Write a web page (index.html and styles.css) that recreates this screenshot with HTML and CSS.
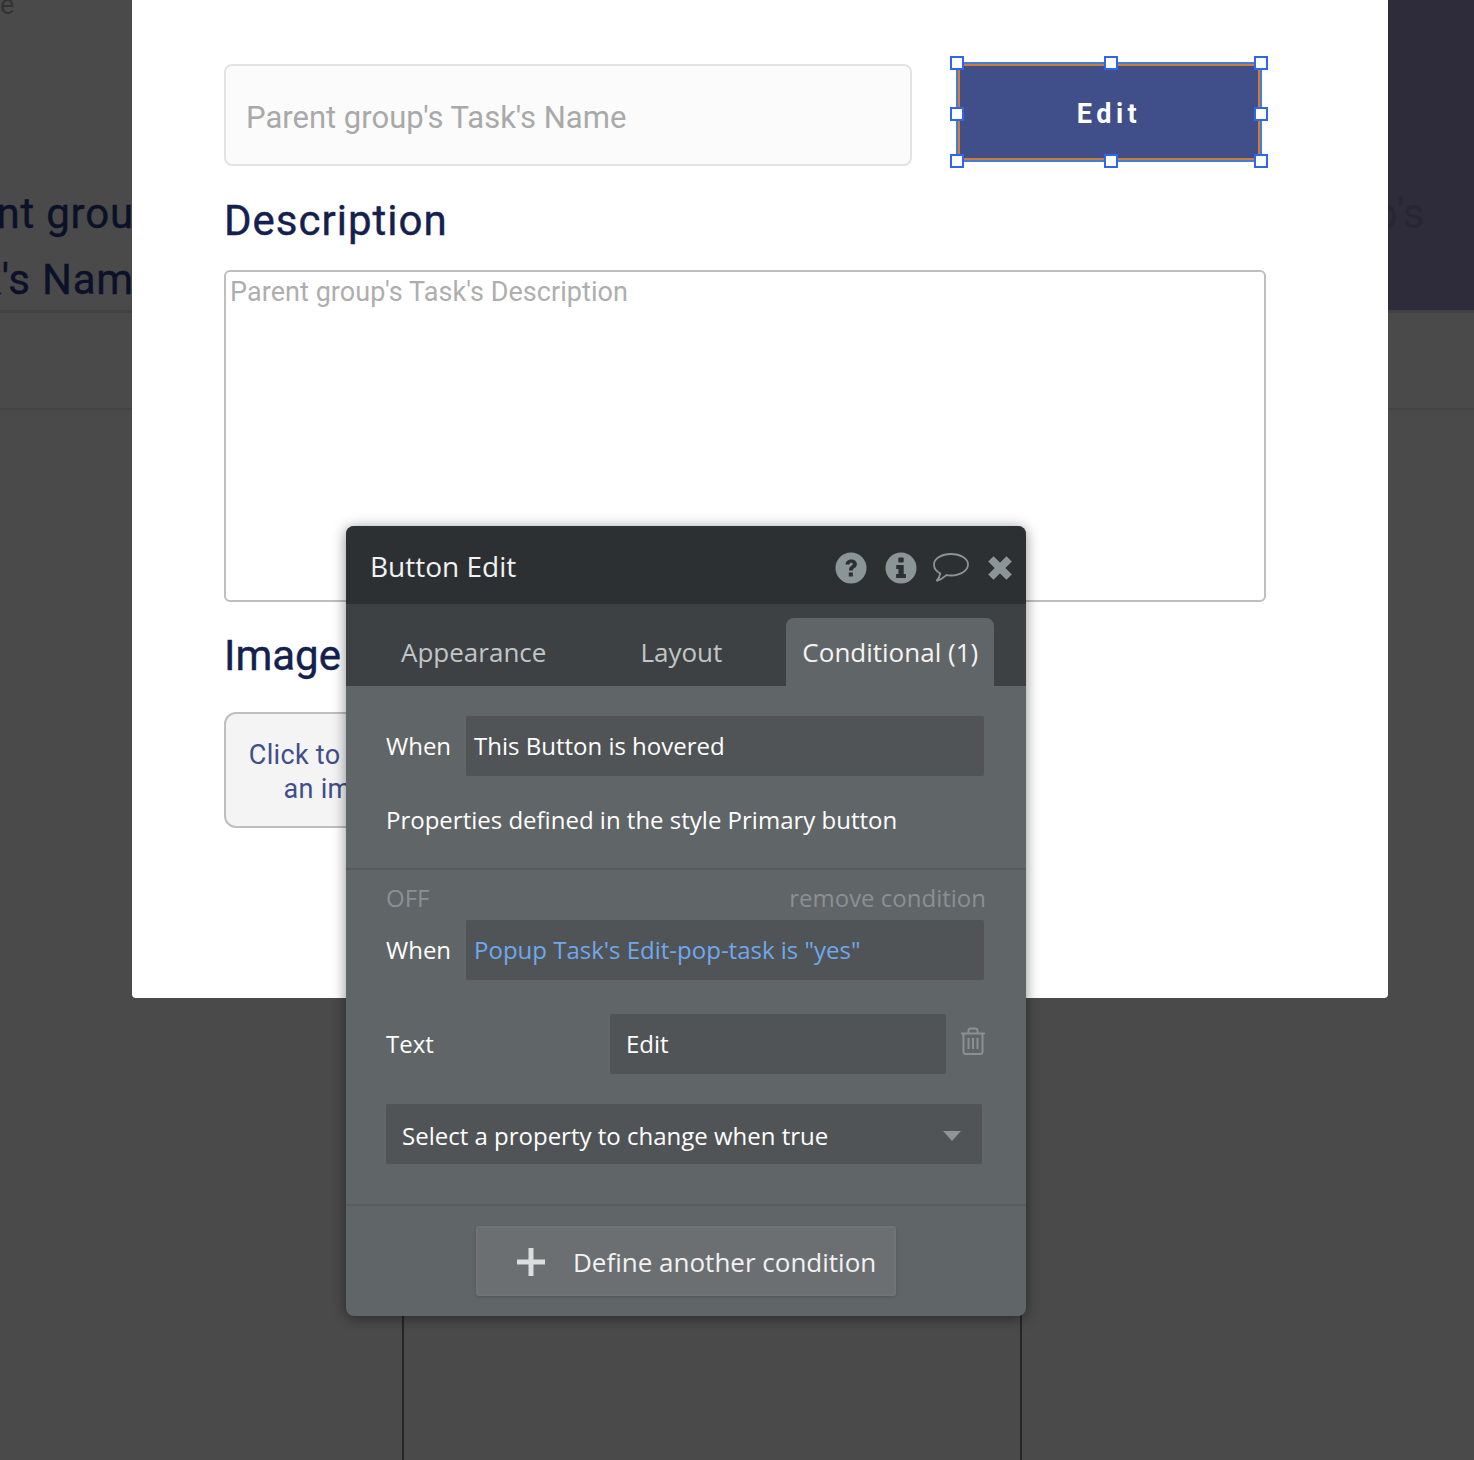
FILE: index.html
```html
<!DOCTYPE html>
<html lang="en">
<head>
    <meta charset="UTF-8">
    <title>Button Edit</title>
    <link rel="stylesheet" href="styles.css">
</head>
<body>
    <div class="backdrop">
        <div class="back-top">
            <div class="back-left">
                <div class="back-letter">e</div>
                <div class="back-line back-line-one">Parent grou</div>
                <div class="back-line back-line-two">Task's Name</div>
            </div>
            <div class="back-right">
                <div class="back-line">p's</div>
            </div>
        </div>
        <div class="back-band"></div>
    </div>

    <div class="modal">
        <div class="name-row">
            <div class="name-input">Parent group's Task's Name</div>
            <div class="edit-button">
                Edit
                <span class="handle h-tl"></span>
                <span class="handle h-tc"></span>
                <span class="handle h-tr"></span>
                <span class="handle h-ml"></span>
                <span class="handle h-mr"></span>
                <span class="handle h-bl"></span>
                <span class="handle h-bc"></span>
                <span class="handle h-br"></span>
            </div>
        </div>
        <h2 class="section-title">Description</h2>
        <div class="description-input">Parent group's Task's Description</div>
        <h2 class="section-title image-title">Image</h2>
        <div class="upload-box">Click to upload an image</div>
    </div>

    <div class="guide guide-left"></div>
    <div class="guide guide-right"></div>

    <div class="panel">
        <div class="panel-header">
            <div class="panel-title">Button Edit</div>
            <div class="panel-icons">
                <svg width="32" height="32" viewBox="0 0 32 32">
                    <circle cx="16" cy="16" r="15.5" fill="#8b9496"/>
                    <path d="M10.5 12.6c.3-3.2 2.700-5 5.800-5 3.200 0 5.600 1.800 5.600 4.600 0 2-1.100 3-2.500 3.900-1.100.7-1.500 1.200-1.500 2.400h-4c0-2.300.7-3.500 2.300-4.500 1-.7 1.600-1.100 1.600-1.900 0-.8-.7-1.300-1.600-1.300-1 0-1.700.6-1.800 1.800z" fill="#2c3033"/>
                    <rect x="13.800" y="20.500" width="4.100" height="4" fill="#2c3033"/>
                </svg>
                <svg width="32" height="32" viewBox="0 0 32 32">
                    <circle cx="16" cy="16" r="15.500" fill="#8b9496"/>
                    <rect x="13.300" y="5.500" width="5.400" height="5" rx="1" fill="#2c3033"/>
                    <path d="M11.200 13h7.500v9h2.200v4h-9.800v-4h2.300v-5h-2.200z" fill="#2c3033"/>
                </svg>
                <svg class="comment-icon" width="36" height="32" viewBox="0 0 36 32">
                    <path d="M18 2C27.500 2 35 6.600 35 12.500S27.500 23.500 18 23.500c-1.600 0-3.200-.1-4.600-.4C10.500 25.800 7.500 27.800 3.500 29c2-2 3.200-4.200 3.800-7.500C3.300 19.500 1 16.200 1 12.500 1 6.600 8.500 2 18 2z" fill="none" stroke="#8b9496" stroke-width="1.800"/>
                </svg>
                <svg width="26" height="26" viewBox="0 0 26 26">
                    <path d="M6.500 6.500l13 13M19.500 6.500l-13 13" fill="none" stroke="#8b9496" stroke-width="7.500" stroke-linecap="square"/>
                </svg>
            </div>
        </div>
        <div class="panel-tabs">
            <div class="tab tab-appearance">Appearance</div>
            <div class="tab tab-layout">Layout</div>
            <div class="tab tab-active">Conditional (1)</div>
        </div>
        <div class="panel-body">
            <div class="condition condition-first">
                <div class="when-row">
                    <span class="field-label">When</span>
                    <div class="field">This Button is hovered</div>
                </div>
                <div class="style-note">Properties defined in the style Primary button</div>
            </div>
            <div class="condition condition-second">
                <div class="condition-top">
                    <span>OFF</span>
                    <span>remove condition</span>
                </div>
                <div class="when-row">
                    <span class="field-label">When</span>
                    <div class="field field-link">Popup Task's Edit-pop-task is "yes"</div>
                </div>
                <div class="text-row">
                    <span class="text-label">Text</span>
                    <div class="field field-text">Edit</div>
                    <svg class="trash" width="26" height="28" viewBox="0 0 26 28">
                        <path d="M1 6.500h24M8.500 6V3.500q0-2 2-2h5q2 0 2 2V6M3.500 6.500v18q0 2.500 2.500 2.500h14q2.500 0 2.500-2.500v-18M8.500 11v11M13 11v11M17.500 11v11" fill="none" stroke="#8b9094" stroke-width="2"/>
                    </svg>
                </div>
                <div class="select-row">
                    <span>Select a property to change when true</span>
                    <span class="caret"></span>
                </div>
            </div>
            <div class="panel-footer">
                <div class="add-button">
                    <svg width="30" height="30" viewBox="0 0 30 30">
                        <path d="M12.500 1h5v11.500H29v5H17.500V29h-5V17.500H1v-5h11.500z" fill="#dcdddd"/>
                    </svg>
                    <span>Define another condition</span>
                </div>
            </div>
        </div>
    </div>
</body>
</html>
```

FILE: styles.css
```css
* {
    margin: 0;
    padding: 0;
    box-sizing: border-box;
}

body {
    width: 1474px;
    height: 1460px;
    position: relative;
    overflow: hidden;
    background: #4a4a4a;
    font-family: 'Open Sans', sans-serif;
}

/* dimmed page behind the popup */
.back-top {
    height: 313px;
    display: flex;
    justify-content: space-between;
    border-bottom: 3px solid #424242;
}

.back-left {
    width: 132px;
    overflow: hidden;
    display: flex;
    flex-direction: column;
    color: #0b1128;
}

.back-letter {
    flex: none;
    height: 192px;
    margin-top: -11px;
    font-family: Roboto, sans-serif;
    font-size: 27px;
    color: #333;
}

.back-line {
    flex: none;
    font-family: Roboto, sans-serif;
    font-size: 42px;
    line-height: 66px;
    white-space: nowrap;
}

.back-line-one {
    letter-spacing: 0.8px;
    -webkit-text-stroke: 0.4px #0b1128;
    text-indent: -92px;
}

.back-line-two {
    letter-spacing: 0.8px;
    -webkit-text-stroke: 0.4px #0b1128;
    text-indent: -90px;
}

.back-right {
    width: 86px;
    background: #2e2c3a;
    padding-top: 181px;
    color: #282633;
    overflow: hidden;
}

.back-right .back-line {
    text-indent: -14px;
}

.back-band {
    height: 97px;
    border-bottom: 2px solid #444;
}

/* popup */
.modal {
    position: absolute;
    left: 132px;
    top: 0;
    width: 1256px;
    height: 998px;
    background: #fff;
    border-radius: 0 0 4px 4px;
    padding: 64px 122px 0 92px;
}

.name-row {
    display: flex;
    align-items: flex-start;
    gap: 44px;
}

.name-input {
    width: 688px;
    height: 102px;
    background: #fbfbfb;
    border: 2px solid #e3e3e3;
    border-radius: 8px;
    padding: 34px 20px 0;
    font-family: Roboto, sans-serif;
    font-size: 31px;
    line-height: 36px;
    color: #a9a9a9;
}

.edit-button {
    position: relative;
    width: 306px;
    height: 100px;
    margin-top: -2px;
    padding-top: 4px;
    background: #404e8a;
    border: 2px solid #3d7ee0;
    box-shadow: inset 0 0 0 2px #d27c2f;
    display: flex;
    align-items: center;
    justify-content: center;
    color: #fff;
    font-family: Roboto, sans-serif;
    font-size: 27px;
    font-weight: 700;
    letter-spacing: 4.500px;
}

.handle {
    position: absolute;
    width: 14px;
    height: 14px;
    background: #fff;
    border: 2px solid #2f66ee;
}

.h-tl, .h-tc, .h-tr { top: -8px; }
.h-ml, .h-mr { top: 43px; }
.h-bl, .h-bc, .h-br { top: 90px; }
.h-tl, .h-ml, .h-bl { left: -8px; }
.h-tc, .h-bc { left: 146px; }
.h-tr, .h-mr, .h-br { left: 296px; }

.section-title {
    font-family: Roboto, sans-serif;
    font-size: 42px;
    font-weight: 400;
    -webkit-text-stroke: 0.4px #14204e;
    letter-spacing: 1px;
    line-height: 50px;
    color: #14204e;
    margin-top: 30px;
}

.description-input {
    width: 1042px;
    height: 332px;
    margin-top: 24px;
    border: 2px solid #bfbfbf;
    border-radius: 6px;
    padding: 3px 4px;
    font-family: Roboto, sans-serif;
    font-size: 27px;
    letter-spacing: 0.06px;
    line-height: 34px;
    color: #aeaeae;
}

.image-title {
    margin-top: 29px;
    letter-spacing: 0;
}

.upload-box {
    width: 232px;
    height: 116px;
    margin-top: 31px;
    border: 2px solid #bfbfbf;
    border-radius: 12px;
    background: #f4f4f4;
    padding: 24px 14px 0;
    text-align: center;
    font-family: Roboto, sans-serif;
    font-size: 27px;
    letter-spacing: 0.3px;
    line-height: 34px;
    color: #404e8a;
}

.guide {
    position: absolute;
    top: 1300px;
    width: 2px;
    height: 160px;
    background: #262626;
}

.guide-left { left: 402px; }
.guide-right { left: 1020px; }

/* property editor */
.panel {
    position: absolute;
    left: 346px;
    top: 526px;
    width: 680px;
    height: 790px;
    border-radius: 8px;
    overflow: hidden;
    background: #606567;
    box-shadow: 0 2px 14px rgba(0, 0, 0, 0.45);
    color: #fff;
    font-size: 24px;
    line-height: 36px;
}

.panel-header {
    height: 78px;
    background: #2c3033;
    display: flex;
    align-items: center;
    justify-content: space-between;
    padding: 0 13px 0 24px;
}

.panel-title {
    padding-top: 2px;
    font-size: 28px;
    color: #f2f2f2;
}

.panel-icons {
    display: flex;
    align-items: center;
    gap: 18px;
    margin-top: 6px;
}

.comment-icon {
    margin-left: -2px;
}

.panel-tabs {
    height: 82px;
    background: #3d4144;
    display: flex;
    align-items: flex-end;
    font-size: 26px;
}

.tab {
    height: 68px;
    padding-top: 16px;
    color: #c2c5c6;
}

.tab-appearance { margin-left: 55px; }
.tab-layout { margin-left: 94px; }

.tab-active {
    margin-left: 64px;
    width: 208px;
    text-align: center;
    background: #606567;
    border-radius: 8px 8px 0 0;
    color: #f4f4f4;
}

.condition-first {
    height: 184px;
    padding: 30px 40px 0;
    border-bottom: 2px solid #575b5e;
}

.when-row {
    display: flex;
    align-items: center;
    gap: 15px;
}

.field-label {
    width: 65px;
    flex: none;
}

.field {
    width: 518px;
    height: 60px;
    background: #505457;
    border-radius: 2px;
    padding: 12px 8px;
}

.field-link {
    color: #6fa8ec;
}

.style-note {
    margin-top: 26px;
}

.condition-second {
    height: 336px;
    padding: 10px 40px 0;
    border-bottom: 2px solid #595d60;
}

.condition-top {
    height: 40px;
    display: flex;
    justify-content: space-between;
    color: #8b9094;
}

.text-row {
    display: flex;
    align-items: center;
    margin-top: 34px;
}

.text-label {
    width: 224px;
    flex: none;
}

.field-text {
    width: 336px;
    flex: none;
    padding-left: 16px;
}

.trash {
    flex: none;
    margin: -6px 0 0 14px;
}

.select-row {
    width: 596px;
    height: 60px;
    margin-top: 30px;
    background: #505457;
    border-radius: 2px;
    padding: 14px 16px 10px;
    display: flex;
    justify-content: space-between;
    align-items: center;
}

.caret {
    width: 0;
    height: 0;
    margin-right: 5px;
    border-left: 9px solid transparent;
    border-right: 9px solid transparent;
    border-top: 10px solid #8f9498;
}

.panel-footer {
    padding-top: 20px;
    display: flex;
    justify-content: center;
}

.add-button {
    width: 420px;
    height: 70px;
    padding-top: 2px;
    background: #6b6f72;
    border: 2px solid #707477;
    border-radius: 3px;
    box-shadow: 0 1px 3px rgba(0, 0, 0, 0.15);
    display: flex;
    align-items: center;
    gap: 27px;
    padding-left: 38px;
    color: #f2f2f2;
    font-size: 26px;
}
```
